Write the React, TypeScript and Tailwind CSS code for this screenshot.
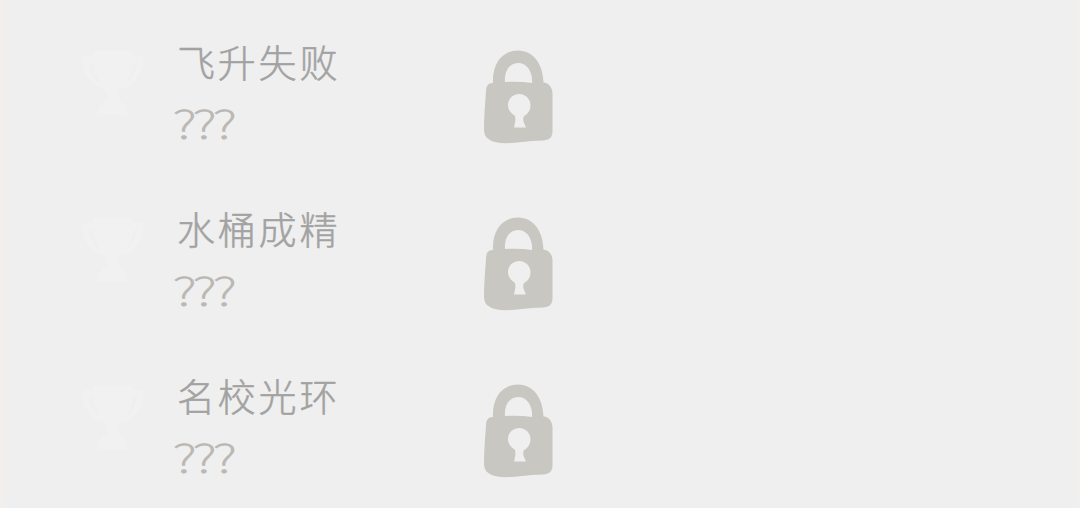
type Achievement = {
  title: string;
  hint: string;
};

const achievements: Achievement[] = [
  { title: "飞升失败", hint: "???" },
  { title: "水桶成精", hint: "???" },
  { title: "名校光环", hint: "???" },
];

function TrophyIcon() {
  return (
    <svg viewBox="0 0 66 70" className="h-[70px] w-[66px] shrink-0" aria-hidden>
      <path
        d="M13 2H53L52 7Q64 4 64 11Q60 35 43 39Q36 42 39 50Q46 56 48 66H17Q18 55 27 50Q29 42 22 39Q5 34 2 11Q2 5 13 7Z"
        fill="#f1f1f1"
      />
      <path
        d="M9 13Q10 27 19 33Q14 24 12 14ZM57 13Q55 27 47 33Q52 24 54 14Z"
        fill="#efefef"
      />
    </svg>
  );
}

function LockIcon() {
  return (
    <svg viewBox="0 0 70 94" className="h-[94px] w-[70px] shrink-0" aria-hidden>
      <path
        fill="#c8c7c2"
        fillRule="evenodd"
        d="M10 33C9 14 19 .5 35 .5C51 .5 60 15 60.500 32.500C66 33 69 37 69.500 43V82C69 88 66 90 60 90.500C52 91 46 91 39 92C30 93 21 94 12 92C4 90 1 86 1 79C1 67 2 55 3 42C3 36 5 33 10 33ZM22 32Q36 31 49 33C50 22 44 13 35 13C26 13 21 22 22 32ZM36.500 44C29.500 44 25 49 25 55C25 60 28 63 32 66C33 70 32 73 31 77.500H43C41 73 39 70 41 66C45 64 47.500 60 47.500 55C47.500 49 42.500 44 36.500 44Z"
      />
    </svg>
  );
}

function AchievementRow({ title, hint }: Achievement) {
  return (
    <li className="flex h-[167px] items-start">
      <div className="pt-[49px]">
        <TrophyIcon />
      </div>
      <div className="ml-[29px] w-[308px] pt-[36px]">
        <h2 className="h-[50px] pl-[2px] text-[38px] leading-[50px] font-light tracking-[2.8px] whitespace-nowrap text-[#a2a2a2] [-webkit-text-stroke:0.5px_#a2a2a2]">
          {title}
        </h2>
        <p className="mt-[11px] -ml-[2px] h-[50px] w-fit origin-left scale-x-[1.4] text-[38.5px] leading-[50px] font-thin tracking-[-2.4px] whitespace-nowrap text-[#bbb8b4] [-webkit-text-stroke:0.9px_#bbb8b4]">
          {hint}
        </p>
      </div>
      <div className="pt-[50px]">
        <LockIcon />
      </div>
    </li>
  );
}

export default function App() {
  return (
    <main className="h-[508px] w-[1080px] overflow-hidden border-x-[3px] border-[#f3efec] bg-[#efefef] font-['Noto_Sans_CJK_SC',sans-serif]">
      <ul className="pl-[77px]">
        {achievements.map((item) => (
          <AchievementRow key={item.title} {...item} />
        ))}
      </ul>
    </main>
  );
}
